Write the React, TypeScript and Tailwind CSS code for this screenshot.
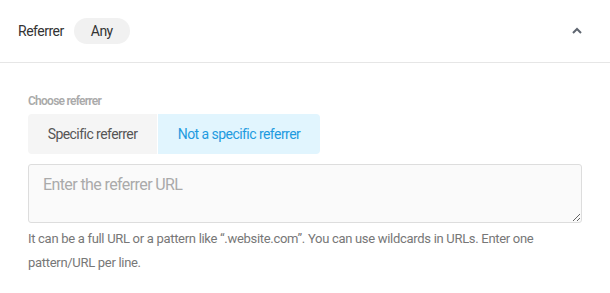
import { FC } from "react";

const ReferrerPanel: FC = () => {
  return (
    <div className="w-[610px] h-[293px] bg-white font-['Roboto',sans-serif]">
      {/* header */}
      <div className="h-[63px] flex items-center pl-[18px] pr-[28px] border-b border-[#e6e6e6]">
        <span className="text-[14px] tracking-[-0.5px] text-[#333]">Referrer</span>
        <span className="ml-[10px] h-[26px] w-[56px] flex items-center justify-center rounded-full bg-[#f1f1f1] text-[14px] tracking-[-0.6px] text-[#333]">
          Any
        </span>
        <svg className="ml-auto" width="10" height="8" viewBox="0 0 10 8" fill="none">
          <path d="M1 6 L5 2 L9 6" stroke="#5f6670" strokeWidth="2" />
        </svg>
      </div>

      <div className="pl-[28px] pr-[28px] pt-[31px]">
        <div className="text-[12px] font-semibold tracking-[-0.75px] text-[#aaa] leading-[14px]">Choose referrer</div>
        <div className="mt-[6px] flex">
          <button className="h-[40px] w-[129px] rounded-l-[4px] bg-[#f5f5f5] text-[14px] tracking-[-0.55px] text-[#555]">
            Specific referrer
          </button>
          <button className="ml-px h-[40px] w-[162px] rounded-r-[4px] bg-[#e1f5fe] text-[14px] tracking-[-0.55px] text-[#1e9be0]">
            Not a specific referrer
          </button>
        </div>
        <textarea
          className="mt-[10px] block w-[554px] h-[59px] rounded-[3px] border border-[#ddd] bg-[#fafafa] px-[14px] py-[8px] text-[16px] tracking-[-0.6px] text-[#333] placeholder:text-[#aaa] outline-none"
          placeholder="Enter the referrer URL"
        />
        <p className="mt-[4px] text-[13px] leading-[24px] tracking-[-0.3px] text-[#777] w-[530px]">
          It can be a full URL or a pattern like “.website.com”. You can use wildcards in URLs. Enter one pattern/URL per line.
        </p>
      </div>
    </div>
  );
};

export default ReferrerPanel;
